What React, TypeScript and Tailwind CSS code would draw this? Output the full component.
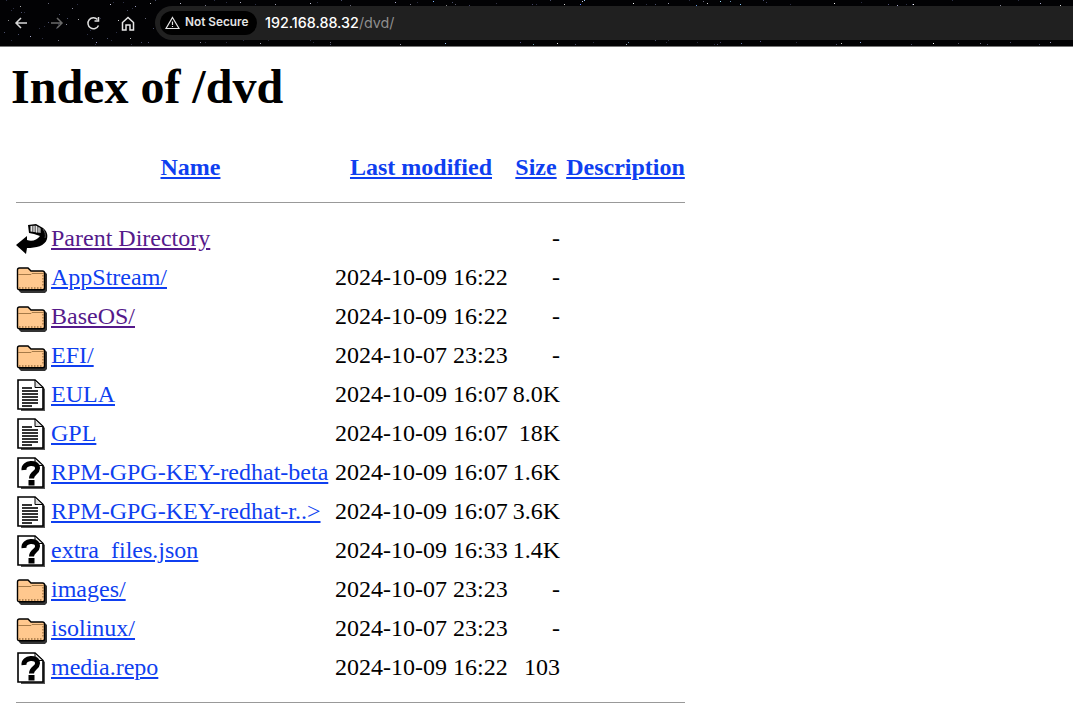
const brightStars: [number, number, string][] = [
  [433, 1, "#7fb6ff"], [446, 5, "#888"], [455, 4, "#556"], [469, 5, "#446"], [496, 3, "#334"],
  [532, 4, "#446"], [564, 4, "#ccc"], [580, 4, "#68f"], [582, 1, "#ccd"], [584, 0, "#9cf"],
  [633, 3, "#fff"], [668, 3, "#99a"], [696, 5, "#69d"], [703, 1, "#667"], [707, 3, "#ccc"],
  [720, 1, "#9df"], [730, 1, "#68a"], [740, 4, "#8cf"], [766, 2, "#446"], [834, 3, "#eee"],
  [888, 4, "#557"], [897, 5, "#aac"], [913, 4, "#fff"], [20, 6, "#aaa"], [48, 3, "#667"],
  [72, 8, "#889"], [110, 4, "#ccd"], [135, 6, "#99b"], [150, 3, "#bbb"], [8, 20, "#888"],
  [66, 24, "#889"], [78, 19, "#aaa"], [118, 20, "#ccc"], [145, 18, "#667"], [30, 36, "#aac"],
  [58, 40, "#778"], [96, 42, "#99c"], [130, 38, "#bbb"], [148, 42, "#557"], [180, 3, "#bbc"],
  [205, 5, "#778"], [240, 2, "#aab"], [275, 4, "#99a"], [310, 3, "#ccd"], [350, 5, "#667"],
  [395, 2, "#aac"], [410, 4, "#778"], [445, 43, "#9cf"], [520, 42, "#558"], [533, 44, "#69a"],
  [557, 43, "#ddd"], [626, 44, "#9ab"], [628, 42, "#68a"], [720, 42, "#446"], [741, 43, "#67a"],
  [760, 41, "#558"], [841, 43, "#ccc"], [860, 42, "#8ad"], [933, 43, "#fff"], [958, 43, "#556"],
  [200, 42, "#889"], [260, 43, "#aab"], [330, 42, "#667"], [400, 44, "#99a"], [1000, 5, "#889"],
  [1040, 3, "#aac"], [1060, 5, "#ddd"], [980, 43, "#778"], [1050, 42, "#99b"],
];

// faint background stars, fixed seed so the picture stays the same
const faintStars: [number, number, string][] = [];
let seed = 41;
for (let i = 0; i < 170; i++) {
  seed = (seed * 1103515245 + 12345) % 2147483648;
  const x = seed % 1073;
  seed = (seed * 1103515245 + 12345) % 2147483648;
  const y = seed % 46;
  faintStars.push([x, y, i % 3 === 0 ? "#4a4f6a" : "#2c2f44"]);
}

const rows = [
  { icon: "back", name: "Parent Directory", date: "", size: "-", visited: true },
  { icon: "folder", name: "AppStream/", date: "2024-10-09 16:22", size: "-" },
  { icon: "folder", name: "BaseOS/", date: "2024-10-09 16:22", size: "-", visited: true },
  { icon: "folder", name: "EFI/", date: "2024-10-07 23:23", size: "-" },
  { icon: "text", name: "EULA", date: "2024-10-09 16:07", size: "8.0K" },
  { icon: "text", name: "GPL", date: "2024-10-09 16:07", size: "18K" },
  { icon: "unknown", name: "RPM-GPG-KEY-redhat-beta", date: "2024-10-09 16:07", size: "1.6K" },
  { icon: "text", name: "RPM-GPG-KEY-redhat-r..>", date: "2024-10-09 16:07", size: "3.6K" },
  { icon: "unknown", name: "extra_files.json", date: "2024-10-09 16:33", size: "1.4K" },
  { icon: "folder", name: "images/", date: "2024-10-07 23:23", size: "-" },
  { icon: "folder", name: "isolinux/", date: "2024-10-07 23:23", size: "-" },
  { icon: "unknown", name: "media.repo", date: "2024-10-09 16:22", size: "103" },
];

const FileIcon = ({ kind }: { kind: string }) => {
  if (kind === "back") {
    return (
      <svg width="32" height="32" viewBox="0 0 32 32">
        <path d="M0 22 L11 13 L11 17 C16 19 21 17 24 13 L18 11 L13 10 L12 2 L20 1 L27 5 C31 8 32 12 31 16 C29 23 20 25 11 25 L10 31 Z" fill="#000" />
        <path d="M14 3 L20 2.5 L25 5.5 L25 10 L14 8.5 Z" fill="#777" />
        <path d="M15.5 3 V8.5 M18 3 V9 M20.5 3 V9.5 M23 4.5 V9.5" stroke="#e8e8e8" strokeWidth="1" />
        <path d="M27 6 C29 9 30 12 29 15" fill="none" stroke="#555" strokeWidth="1" />
      </svg>
    );
  }
  if (kind === "folder") {
    return (
      <svg width="32" height="32" viewBox="0 0 32 32">
        <path d="M3 8 H14 L16 10 H29 L31 12 V29 L29 31 H5 L3 29 Z" fill="#333" />
        <path d="M1.5 8 Q1.5 6 3.5 6 L12 6 L15 9 L26.5 9 Q28.5 9 28.5 11 L28.5 26 Q28.5 27.8 26.5 27.8 L3.5 27.8 Q1.5 27.8 1.5 26 Z" fill="#ffc88e" stroke="#000" strokeWidth="1.4" />
        <path d="M2 12.5 H15 L16 11.5 H28" fill="none" stroke="#a67a48" strokeWidth="1" />
        <path d="M3 26 H27 M27 13 V25" stroke="#9c7040" strokeWidth="1.3" strokeDasharray="1.5 1.5" />
      </svg>
    );
  }
  return (
    <svg width="32" height="32" viewBox="0 0 32 32">
      <path d="M5 3 H21 L29 10 V32 H5 Z" fill="#555" />
      <path d="M2 1 H19 L27 8.5 V30 H2 Z" fill="#fff" stroke="#000" strokeWidth="1.6" />
      <path d="M19 1 V8.5 H27 Z" fill="#ddd" stroke="#000" strokeWidth="1" />
      {kind === "text" ? (
        <path d="M6 9 H16 M6 12 H22 M6 15 H22 M6 18 H22 M6 21 H22 M6 24 H22 M6 27 H16" stroke="#333" strokeWidth="1.9" />
      ) : (
        <>
          <path d="M8 13 C7 5 22 4 21.5 11.5 C21.3 16 15.5 16 15.5 21.5" fill="none" stroke="#000" strokeWidth="5" />
          <rect x="12.5" y="23" width="6" height="5.5" fill="#000" />
        </>
      )}
    </svg>
  );
};

const Header = ({ children }: { children: string }) => (
  <a href="#" className="font-bold text-[#0f3ff0] underline">
    {children}
  </a>
);

export default function App() {
  return (
    <div className="h-[726px] overflow-hidden bg-white font-['Liberation_Serif',serif] text-black">
      <div className="relative flex h-[47px] items-start overflow-hidden border-b border-[#777] bg-[#020204] pt-[6px] font-['Inter',sans-serif]">
        <svg className="absolute inset-0" width="1073" height="46">
          {faintStars.concat(brightStars).map(([x, y, c], i) => (
            <rect key={i} x={x} y={y} width="1" height="1" fill={c} />
          ))}
        </svg>
        <div className="relative flex h-[34px] w-[155px] shrink-0 items-center">
          <svg className="ml-[14px]" width="14" height="14" viewBox="0 0 14 14" fill="none" stroke="#d8d8d8" strokeWidth="1.5">
            <path d="M13 7 H2 M7 2 L2 7 L7 12" />
          </svg>
          <svg className="ml-[22px]" width="14" height="14" viewBox="0 0 14 14" fill="none" stroke="#6b6b6b" strokeWidth="1.5">
            <path d="M1 7 H12 M7 2 L12 7 L7 12" />
          </svg>
          <svg className="ml-[22px]" width="15" height="15" viewBox="0 0 15 15" fill="none" stroke="#e0e0e0" strokeWidth="1.5">
            <path d="M12.5 9.5 A5.5 5.5 0 1 1 11.5 3.5" />
            <path d="M12.5 1 V5 H8.5" />
          </svg>
          <svg className="ml-[20px]" width="14" height="15" viewBox="0 0 14 15" fill="none" stroke="#e8e8e8" strokeWidth="1.5">
            <path d="M1.5 14 V6.5 L7 1.5 L12.5 6.5 V14 H9 V9 H5 V14 Z" />
          </svg>
        </div>
        <div className="relative flex h-[34px] flex-1 items-center rounded-l-[17px] bg-[#202020] pl-[5px]">
          <div className="flex h-[24px] w-[97px] items-center gap-[5px] rounded-full bg-black pl-[5px] text-[11.8px] font-semibold text-[#e4e4e4]">
            <svg width="15" height="14" viewBox="0 0 15 14" fill="none" stroke="#e4e4e4" strokeWidth="1.2">
              <path d="M7.5 1.5 L14 12.5 H1 Z" />
              <path d="M7.5 5.5 V9 M7.5 10 V11" />
            </svg>
            Not Secure
          </div>
          <span className="ml-[8px] text-[14.3px] font-medium text-white">
            192.168.88.32<span className="font-normal text-[#8e8e8e]">/dvd/</span>
          </span>
        </div>
      </div>

      <h1 className="mt-[12px] ml-[11px] text-[48px] leading-[55px] font-bold">Index of /dvd</h1>

      <table className="mt-[34px] ml-[12px] border-separate border-spacing-x-[4px] border-spacing-y-0 text-[24px] leading-[27px]">
        <thead>
          <tr className="h-[39px]">
            <th className="w-[31px] min-w-[31px] p-0"></th>
            <th className="w-[279px] min-w-[279px] p-0 pr-[2px] text-center"><Header>Name</Header></th>
            <th className="w-[173px] min-w-[173px] p-0 pr-[1px] text-center"><Header>Last modified</Header></th>
            <th className="w-[48px] min-w-[48px] p-0 text-center"><Header>Size</Header></th>
            <th className="w-[121px] min-w-[121px] p-0 pl-[2px] text-center"><Header>Description</Header></th>
          </tr>
          <tr className="h-[31px]">
            <th colSpan={5} className="p-0">
              <hr className="mb-[1px] h-[1px] border-0 bg-[#999]" />
            </th>
          </tr>
        </thead>
        <tbody>
          <tr className="h-[1px]"></tr>
          {rows.map((row) => (
            <tr key={row.name} className="h-[39px]">
              <td className="p-0 align-middle">
                <FileIcon kind={row.icon} />
              </td>
              <td className="p-0 whitespace-nowrap">
                <a href="#" className={row.visited ? "-ml-px text-[#551a8b] underline" : "-ml-px text-[#0f3ff0] underline"}>
                  {row.name}
                </a>
              </td>
              <td className="p-0 whitespace-nowrap">{row.date}</td>
              <td className="p-0 text-right">{row.size}</td>
              <td className="p-0"></td>
            </tr>
          ))}
          <tr>
            <th colSpan={5} className="p-0 pt-[15px]">
              <hr className="h-[1px] border-0 bg-[#999]" />
            </th>
          </tr>
        </tbody>
      </table>
    </div>
  );
}
